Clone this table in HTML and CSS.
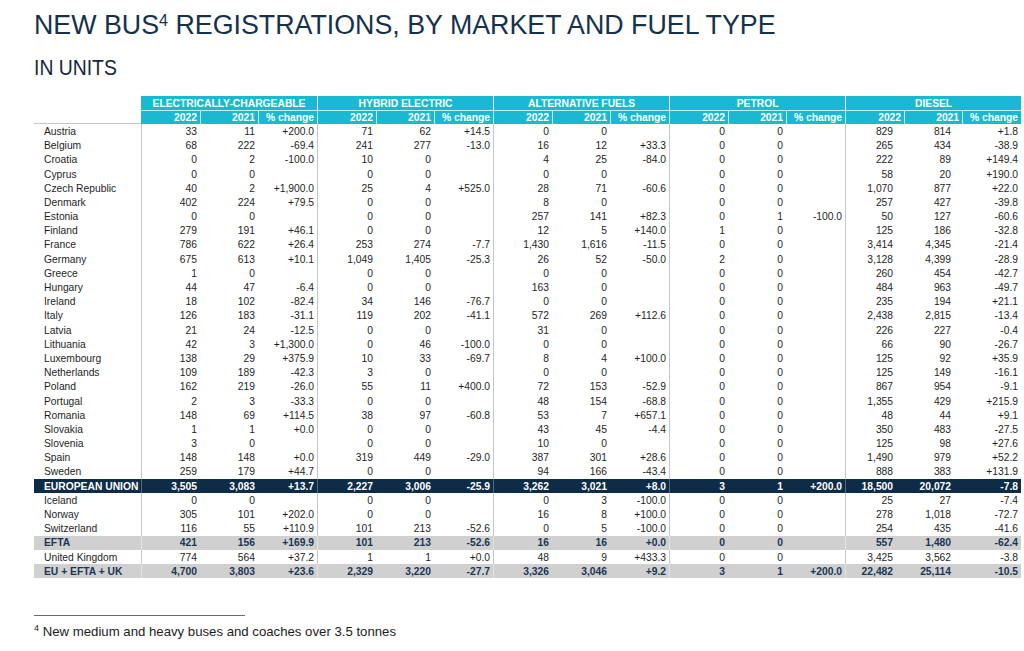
FILE: index.html
```html
<!DOCTYPE html>
<html lang="en">
<head>
<meta charset="utf-8">
<title>New bus registrations</title>
<link rel="stylesheet" href="styles.css">
</head>
<body>
<div class="page">
  <h1 class="title">NEW BUS<sup class="tsup">4</sup> REGISTRATIONS, BY MARKET AND FUEL TYPE</h1>
  <h2 class="sub"><span class="sub-text">IN UNITS</span></h2>
  <table class="data">
    <colgroup>
      <col class="c-country">
      <col class="c-a"><col class="c-b"><col class="c-c">
      <col class="c-a"><col class="c-b"><col class="c-c">
      <col class="c-a"><col class="c-b"><col class="c-c">
      <col class="c-a"><col class="c-b"><col class="c-c">
      <col class="c-a"><col class="c-b"><col class="c-c">
    </colgroup>
    <thead>
      <tr class="h1row">
        <th class="blank"></th>
        <th colspan="3" class="grp first">ELECTRICALLY-CHARGEABLE</th>
        <th colspan="3" class="grp">HYBRID ELECTRIC</th>
        <th colspan="3" class="grp">ALTERNATIVE FUELS</th>
        <th colspan="3" class="grp">PETROL</th>
        <th colspan="3" class="grp">DIESEL</th>
      </tr>
      <tr class="h2row">
        <th class="blank under"></th>
        <th class="yr first">2022</th><th class="yr">2021</th><th class="yr">% change</th>
        <th class="yr">2022</th><th class="yr">2021</th><th class="yr">% change</th>
        <th class="yr">2022</th><th class="yr">2021</th><th class="yr">% change</th>
        <th class="yr">2022</th><th class="yr">2021</th><th class="yr">% change</th>
        <th class="yr">2022</th><th class="yr">2021</th><th class="yr">% change</th>
      </tr>
    </thead>
    <tbody>
      <tr><td class="c">Austria</td><td class="g">33</td><td>11</td><td>+200.0</td><td class="g">71</td><td>62</td><td>+14.5</td><td class="g">0</td><td>0</td><td></td><td class="g">0</td><td>0</td><td></td><td class="g">829</td><td>814</td><td>+1.8</td></tr>
      <tr><td class="c">Belgium</td><td class="g">68</td><td>222</td><td>-69.4</td><td class="g">241</td><td>277</td><td>-13.0</td><td class="g">16</td><td>12</td><td>+33.3</td><td class="g">0</td><td>0</td><td></td><td class="g">265</td><td>434</td><td>-38.9</td></tr>
      <tr><td class="c">Croatia</td><td class="g">0</td><td>2</td><td>-100.0</td><td class="g">10</td><td>0</td><td></td><td class="g">4</td><td>25</td><td>-84.0</td><td class="g">0</td><td>0</td><td></td><td class="g">222</td><td>89</td><td>+149.4</td></tr>
      <tr><td class="c">Cyprus</td><td class="g">0</td><td>0</td><td></td><td class="g">0</td><td>0</td><td></td><td class="g">0</td><td>0</td><td></td><td class="g">0</td><td>0</td><td></td><td class="g">58</td><td>20</td><td>+190.0</td></tr>
      <tr><td class="c">Czech Republic</td><td class="g">40</td><td>2</td><td>+1,900.0</td><td class="g">25</td><td>4</td><td>+525.0</td><td class="g">28</td><td>71</td><td>-60.6</td><td class="g">0</td><td>0</td><td></td><td class="g">1,070</td><td>877</td><td>+22.0</td></tr>
      <tr><td class="c">Denmark</td><td class="g">402</td><td>224</td><td>+79.5</td><td class="g">0</td><td>0</td><td></td><td class="g">8</td><td>0</td><td></td><td class="g">0</td><td>0</td><td></td><td class="g">257</td><td>427</td><td>-39.8</td></tr>
      <tr><td class="c">Estonia</td><td class="g">0</td><td>0</td><td></td><td class="g">0</td><td>0</td><td></td><td class="g">257</td><td>141</td><td>+82.3</td><td class="g">0</td><td>1</td><td>-100.0</td><td class="g">50</td><td>127</td><td>-60.6</td></tr>
      <tr><td class="c">Finland</td><td class="g">279</td><td>191</td><td>+46.1</td><td class="g">0</td><td>0</td><td></td><td class="g">12</td><td>5</td><td>+140.0</td><td class="g">1</td><td>0</td><td></td><td class="g">125</td><td>186</td><td>-32.8</td></tr>
      <tr><td class="c">France</td><td class="g">786</td><td>622</td><td>+26.4</td><td class="g">253</td><td>274</td><td>-7.7</td><td class="g">1,430</td><td>1,616</td><td>-11.5</td><td class="g">0</td><td>0</td><td></td><td class="g">3,414</td><td>4,345</td><td>-21.4</td></tr>
      <tr><td class="c">Germany</td><td class="g">675</td><td>613</td><td>+10.1</td><td class="g">1,049</td><td>1,405</td><td>-25.3</td><td class="g">26</td><td>52</td><td>-50.0</td><td class="g">2</td><td>0</td><td></td><td class="g">3,128</td><td>4,399</td><td>-28.9</td></tr>
      <tr><td class="c">Greece</td><td class="g">1</td><td>0</td><td></td><td class="g">0</td><td>0</td><td></td><td class="g">0</td><td>0</td><td></td><td class="g">0</td><td>0</td><td></td><td class="g">260</td><td>454</td><td>-42.7</td></tr>
      <tr><td class="c">Hungary</td><td class="g">44</td><td>47</td><td>-6.4</td><td class="g">0</td><td>0</td><td></td><td class="g">163</td><td>0</td><td></td><td class="g">0</td><td>0</td><td></td><td class="g">484</td><td>963</td><td>-49.7</td></tr>
      <tr><td class="c">Ireland</td><td class="g">18</td><td>102</td><td>-82.4</td><td class="g">34</td><td>146</td><td>-76.7</td><td class="g">0</td><td>0</td><td></td><td class="g">0</td><td>0</td><td></td><td class="g">235</td><td>194</td><td>+21.1</td></tr>
      <tr><td class="c">Italy</td><td class="g">126</td><td>183</td><td>-31.1</td><td class="g">119</td><td>202</td><td>-41.1</td><td class="g">572</td><td>269</td><td>+112.6</td><td class="g">0</td><td>0</td><td></td><td class="g">2,438</td><td>2,815</td><td>-13.4</td></tr>
      <tr><td class="c">Latvia</td><td class="g">21</td><td>24</td><td>-12.5</td><td class="g">0</td><td>0</td><td></td><td class="g">31</td><td>0</td><td></td><td class="g">0</td><td>0</td><td></td><td class="g">226</td><td>227</td><td>-0.4</td></tr>
      <tr><td class="c">Lithuania</td><td class="g">42</td><td>3</td><td>+1,300.0</td><td class="g">0</td><td>46</td><td>-100.0</td><td class="g">0</td><td>0</td><td></td><td class="g">0</td><td>0</td><td></td><td class="g">66</td><td>90</td><td>-26.7</td></tr>
      <tr><td class="c">Luxembourg</td><td class="g">138</td><td>29</td><td>+375.9</td><td class="g">10</td><td>33</td><td>-69.7</td><td class="g">8</td><td>4</td><td>+100.0</td><td class="g">0</td><td>0</td><td></td><td class="g">125</td><td>92</td><td>+35.9</td></tr>
      <tr><td class="c">Netherlands</td><td class="g">109</td><td>189</td><td>-42.3</td><td class="g">3</td><td>0</td><td></td><td class="g">0</td><td>0</td><td></td><td class="g">0</td><td>0</td><td></td><td class="g">125</td><td>149</td><td>-16.1</td></tr>
      <tr><td class="c">Poland</td><td class="g">162</td><td>219</td><td>-26.0</td><td class="g">55</td><td>11</td><td>+400.0</td><td class="g">72</td><td>153</td><td>-52.9</td><td class="g">0</td><td>0</td><td></td><td class="g">867</td><td>954</td><td>-9.1</td></tr>
      <tr><td class="c">Portugal</td><td class="g">2</td><td>3</td><td>-33.3</td><td class="g">0</td><td>0</td><td></td><td class="g">48</td><td>154</td><td>-68.8</td><td class="g">0</td><td>0</td><td></td><td class="g">1,355</td><td>429</td><td>+215.9</td></tr>
      <tr><td class="c">Romania</td><td class="g">148</td><td>69</td><td>+114.5</td><td class="g">38</td><td>97</td><td>-60.8</td><td class="g">53</td><td>7</td><td>+657.1</td><td class="g">0</td><td>0</td><td></td><td class="g">48</td><td>44</td><td>+9.1</td></tr>
      <tr><td class="c">Slovakia</td><td class="g">1</td><td>1</td><td>+0.0</td><td class="g">0</td><td>0</td><td></td><td class="g">43</td><td>45</td><td>-4.4</td><td class="g">0</td><td>0</td><td></td><td class="g">350</td><td>483</td><td>-27.5</td></tr>
      <tr><td class="c">Slovenia</td><td class="g">3</td><td>0</td><td></td><td class="g">0</td><td>0</td><td></td><td class="g">10</td><td>0</td><td></td><td class="g">0</td><td>0</td><td></td><td class="g">125</td><td>98</td><td>+27.6</td></tr>
      <tr><td class="c">Spain</td><td class="g">148</td><td>148</td><td>+0.0</td><td class="g">319</td><td>449</td><td>-29.0</td><td class="g">387</td><td>301</td><td>+28.6</td><td class="g">0</td><td>0</td><td></td><td class="g">1,490</td><td>979</td><td>+52.2</td></tr>
      <tr><td class="c">Sweden</td><td class="g">259</td><td>179</td><td>+44.7</td><td class="g">0</td><td>0</td><td></td><td class="g">94</td><td>166</td><td>-43.4</td><td class="g">0</td><td>0</td><td></td><td class="g">888</td><td>383</td><td>+131.9</td></tr>
      <tr class="eu"><td class="c">EUROPEAN UNION</td><td class="g">3,505</td><td>3,083</td><td>+13.7</td><td class="g">2,227</td><td>3,006</td><td>-25.9</td><td class="g">3,262</td><td>3,021</td><td>+8.0</td><td class="g">3</td><td>1</td><td>+200.0</td><td class="g">18,500</td><td>20,072</td><td>-7.8</td></tr>
      <tr><td class="c">Iceland</td><td class="g">0</td><td>0</td><td></td><td class="g">0</td><td>0</td><td></td><td class="g">0</td><td>3</td><td>-100.0</td><td class="g">0</td><td>0</td><td></td><td class="g">25</td><td>27</td><td>-7.4</td></tr>
      <tr><td class="c">Norway</td><td class="g">305</td><td>101</td><td>+202.0</td><td class="g">0</td><td>0</td><td></td><td class="g">16</td><td>8</td><td>+100.0</td><td class="g">0</td><td>0</td><td></td><td class="g">278</td><td>1,018</td><td>-72.7</td></tr>
      <tr><td class="c">Switzerland</td><td class="g">116</td><td>55</td><td>+110.9</td><td class="g">101</td><td>213</td><td>-52.6</td><td class="g">0</td><td>5</td><td>-100.0</td><td class="g">0</td><td>0</td><td></td><td class="g">254</td><td>435</td><td>-41.6</td></tr>
      <tr class="tot"><td class="c">EFTA</td><td class="g">421</td><td>156</td><td>+169.9</td><td class="g">101</td><td>213</td><td>-52.6</td><td class="g">16</td><td>16</td><td>+0.0</td><td class="g">0</td><td>0</td><td></td><td class="g">557</td><td>1,480</td><td>-62.4</td></tr>
      <tr><td class="c">United Kingdom</td><td class="g">774</td><td>564</td><td>+37.2</td><td class="g">1</td><td>1</td><td>+0.0</td><td class="g">48</td><td>9</td><td>+433.3</td><td class="g">0</td><td>0</td><td></td><td class="g">3,425</td><td>3,562</td><td>-3.8</td></tr>
      <tr class="tot"><td class="c">EU + EFTA + UK</td><td class="g">4,700</td><td>3,803</td><td>+23.6</td><td class="g">2,329</td><td>3,220</td><td>-27.7</td><td class="g">3,326</td><td>3,046</td><td>+9.2</td><td class="g">3</td><td>1</td><td>+200.0</td><td class="g">22,482</td><td>25,114</td><td>-10.5</td></tr>
    </tbody>
  </table>
  <div class="rule"></div>
  <p class="note"><sup class="nsup">4</sup> New medium and heavy buses and coaches over 3.5 tonnes</p>
</div>
</body>
</html>
```

FILE: styles.css
```css
html, body {
  margin: 0;
  padding: 0;
  background: #ffffff;
}

body {
  font-family: "Liberation Sans", Arial, sans-serif;
  color: #1c1c1c;
}

.page {
  padding: 10px 0 0 34px;
}

.title {
  margin: 0;
  font-size: 26.8px;
  line-height: 30px;
  font-weight: normal;
  color: #16314b;
  white-space: nowrap;
}

.tsup {
  font-size: 16px;
  line-height: 0;
  vertical-align: 8px;
}

.sub {
  margin: 16px 0 16px;
  font-size: 22px;
  line-height: 24px;
  font-weight: normal;
  color: #17273a;
}

.sub-text {
  display: inline-block;
  transform: scaleX(0.88);
  transform-origin: left center;
  white-space: nowrap;
}

.data {
  border-collapse: separate;
  border-spacing: 0;
  table-layout: fixed;
  width: 987px;
  font-size: 10.3px;
}

.c-country { width: 107px; }
.c-a { width: 59px; }
.c-b { width: 58px; }
.c-c { width: 59px; }

.data tr {
  height: 14.2px;
}

.data th,
.data td {
  padding: 1px 3px 0 0;
  line-height: 12px;
  white-space: nowrap;
  text-align: right;
  vertical-align: middle;
  box-sizing: border-box;
}

.data th {
  background: #19b9d3;
  color: #ffffff;
  font-weight: bold;
}

.data th.blank {
  background: transparent;
}

.data th.under {
  border-bottom: 1px solid #c4c4c4;
}

.h1row th.grp {
  text-align: center;
  padding: 1px 0 0;
  border-left: 1px solid #ffffff;
}

.h1row th.grp.first {
  border-left: 0;
}

.h2row th.yr {
  border-top: 1px solid rgba(255, 255, 255, 0.75);
  border-left: 1px solid rgba(255, 255, 255, 0.75);
}

.h2row th.yr.first {
  border-left: 0;
}

.data td {
  color: #1e1e1e;
}

.data td.c {
  text-align: left;
  padding: 1px 0 0 10px;
}

.data tbody td:nth-child(14),
.data tbody td:nth-child(15) {
  padding-right: 11px;
}

.data td.g {
  border-left: 1px solid #c6c6c6;
}

.data tr.eu td {
  background: #0c2c47;
  color: #ffffff;
  font-weight: bold;
}

.data tr.eu td.g {
  border-left-color: #4d6a83;
}

.data tr.tot td {
  background: #d0d0d0;
  color: #1b3654;
  font-weight: bold;
}

.data tr.tot td.g {
  border-left-color: #e4e4e4;
}

.rule {
  width: 211px;
  height: 0;
  border-top: 1px solid #6a6a6a;
  margin-top: 37px;
}

.note {
  margin: 8px 0 0;
  font-size: 13.2px;
  line-height: 15px;
  color: #1c1c1c;
}

.nsup {
  font-size: 9px;
  line-height: 0;
  vertical-align: 5px;
}
```
